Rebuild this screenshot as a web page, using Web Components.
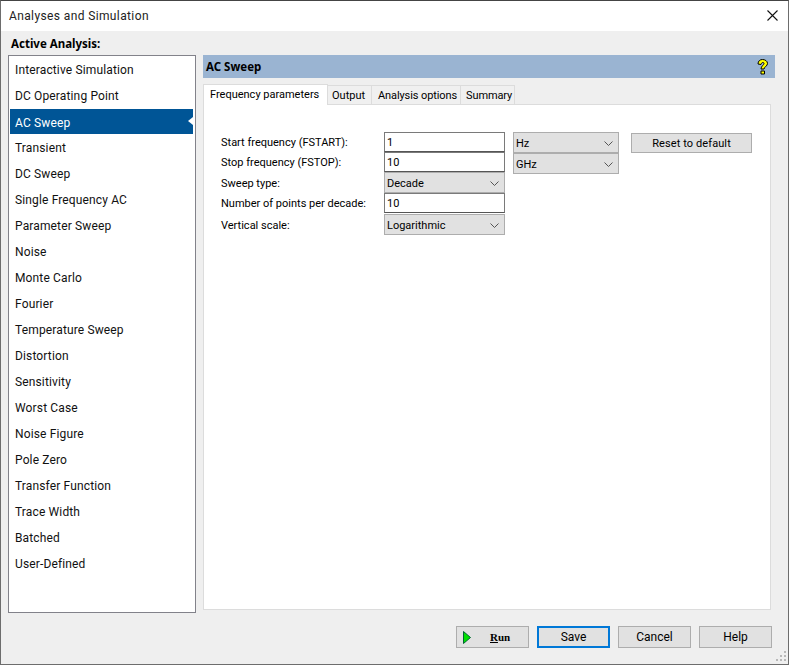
<!DOCTYPE html>
<html>
<head>
<meta charset="utf-8">
<title>Analyses and Simulation</title>
<style>
html, body { margin: 0; padding: 0; background: #efefef; }
body { font: 12px Roboto, "Noto Sans", sans-serif; color: #000; }
</style>
</head>
<body>
<analysis-dialog></analysis-dialog>
<script>
class WinButton extends HTMLElement {
  constructor() {
    super()
    this.attachShadow({ mode: 'open' }).innerHTML = `
<style>
:host { display: block; width: 73px; height: 22px; box-sizing: border-box; border: 1px solid #adadad; background: #e1e1e1;
  font-size: 12px; line-height: 20px; text-align: center; color: #000; }
:host([focused]) { border: 2px solid #0078d7; line-height: 18px; }
</style><slot></slot>`
  }
}
customElements.define('win-button', WinButton)

class ComboBox extends HTMLElement {
  constructor() {
    super()
    this.attachShadow({ mode: 'open' }).innerHTML = `
<style>
:host { display: flex; align-items: center; justify-content: space-between; box-sizing: border-box; height: 21px;
  border: 1px solid #adadad; background: #e1e1e1; padding: 1px 5px 0 2px; font-size: 11px; }
svg { display: block; }
</style><slot></slot>
<svg width="9" height="5" viewBox="0 0 9 5"><path d="M.5.5 4.500 4.500 8.500.5" fill="none" stroke="#555" stroke-width="1"/></svg>`
  }
}
customElements.define('combo-box', ComboBox)

class TextField extends HTMLElement {
  constructor() {
    super()
    this.attachShadow({ mode: 'open' }).innerHTML = `
<style>
:host { display: flex; align-items: center; box-sizing: border-box; height: 20px; border: 1px solid #7a7a7a; border-bottom-color: #555;
  background: #fff; padding: 0 2px; font-size: 11px; }
</style><slot></slot>`
  }
}
customElements.define('text-field', TextField)

class AnalysisList extends HTMLElement {
  constructor() {
    super()
    const items = ['Interactive Simulation', 'DC Operating Point', 'AC Sweep', 'Transient', 'DC Sweep', 'Single Frequency AC',
      'Parameter Sweep', 'Noise', 'Monte Carlo', 'Fourier', 'Temperature Sweep', 'Distortion', 'Sensitivity', 'Worst Case',
      'Noise Figure', 'Pole Zero', 'Transfer Function', 'Trace Width', 'Batched', 'User-Defined']
    this.attachShadow({ mode: 'open' }).innerHTML = `
<style>
:host { display: block; box-sizing: border-box; width: 188px; height: 558px; border: 1px solid #82828a; background: #fff; padding: 1px 2px 0 1px; }
.item { position: relative; height: 26px; line-height: 27px; padding-left: 5px; font-size: 12px; letter-spacing: .14px; color: #111; }
.sel { background: #005596; color: #fff; height: 25px; margin-bottom: 1px; line-height: 28px; }
.sel::after { content: ""; position: absolute; right: 0; top: 8px; border: 4.5px solid transparent; border-right: 5px solid #fff; border-left: 0; }
</style>
${items.map(t => `<div class="item${t === 'AC Sweep' ? ' sel' : ''}">${t}</div>`).join('')}`
  }
}
customElements.define('analysis-list', AnalysisList)

class TabStrip extends HTMLElement {
  constructor() {
    super()
    this.attachShadow({ mode: 'open' }).innerHTML = `
<style>
:host { display: flex; align-items: flex-end; height: 21px; font-size: 11px; position: relative; z-index: 1; margin-bottom: -1px; }
div { box-sizing: border-box; height: 19px; line-height: 20px; padding: 0 0 0 5px; white-space: nowrap; background: #f0f0f0; border: 1px solid #dcdcdc; border-left: 0; border-bottom: 0; margin-bottom: 1px; }
.on { height: 21px; line-height: 20px; background: #fff; border-left: 1px solid #dcdcdc; padding: 0 0 0 6px; margin-bottom: 0; width: 125px; }
</style>
<div class="on">Frequency parameters</div><div style="width:44px;padding-left:4px">Output</div><div style="width:89px;padding-left:6px;letter-spacing:-.1px">Analysis options</div><div style="width:54px;letter-spacing:-.1px">Summary</div>`
  }
}
customElements.define('tab-strip', TabStrip)

class FrequencyForm extends HTMLElement {
  constructor() {
    super()
    this.attachShadow({ mode: 'open' }).innerHTML = `
<style>
:host { display: flex; align-items: flex-start; box-sizing: border-box; width: 568px; height: 506px; background: #fff; border: 1px solid #dcdcdc; padding: 27px 0 0 17px; font-size: 11px; }
.rows { display: grid; grid-template-columns: 163px 121px; grid-template-rows: 20px 20px 21px 21px 21px; align-items: start; }
.rows span { white-space: nowrap; line-height: 22px; }
.rows .low { line-height: 24px; }
.units { display: grid; grid-auto-rows: 21px; margin-left: 8px; width: 106px; }
.reset { margin-left: 12px; margin-top: 1px; width: 121px; height: 20px; line-height: 19px; font-size: 11px; letter-spacing: .1px; }
</style>
<div class="rows">
  <span>Start frequency (FSTART):</span><text-field>1</text-field>
  <span>Stop frequency (FSTOP):</span><text-field>10</text-field>
  <span class="low">Sweep type:</span><combo-box>Decade</combo-box>
  <span>Number of points per decade:</span><text-field style="padding-top:1px">10</text-field>
  <span class="low">Vertical scale:</span><combo-box>Logarithmic</combo-box>
</div>
<div class="units"><combo-box>Hz</combo-box><combo-box>GHz</combo-box></div>
<win-button class="reset">Reset to default</win-button>`
  }
}
customElements.define('frequency-form', FrequencyForm)

class AnalysisDialog extends HTMLElement {
  constructor() {
    super()
    this.attachShadow({ mode: 'open' }).innerHTML = `
<style>
:host { display: block; box-sizing: border-box; width: 789px; height: 665px; border: 1px solid #6d6d6d; border-top-color: #444; background: #efefef; overflow: hidden; position: relative; }
.title { display: flex; justify-content: space-between; align-items: center; box-sizing: border-box; height: 30px; background: #fff; padding: 0 10px 2px 8px; font-size: 12px; letter-spacing: .38px; color: #222; }
.title span { padding-top: 2px; }
.caption { font: 700 11.5px "Noto Sans", sans-serif; height: 24px; line-height: 25px; padding-left: 10px; }
.main { display: flex; gap: 7px; padding-left: 7px; }
.head { display: flex; justify-content: space-between; align-items: center; box-sizing: border-box; width: 572px; height: 23px; background: #9ab4d2; padding: 0 5px 0 3px; font: 700 11.5px "Noto Sans", sans-serif; margin-bottom: 6px; }
.foot { display: flex; justify-content: flex-end; gap: 8px; padding: 13px 16px 0 0; }
.run { display: flex; align-items: center; padding: 0 0 0 6px; }
.run b { font: 700 11px "Liberation Serif", serif; margin-left: 19px; }
.run u { text-decoration: underline; }
.grip { position: absolute; right: 1px; bottom: 1px; }
</style>
<div class="title"><span>Analyses and Simulation</span>
  <svg width="11" height="11" viewBox="0 0 11 11"><path d="M.5.5 10.500 10.500M10.500.5.5 10.500" stroke="#111" stroke-width="1.100" fill="none"/></svg>
</div>
<div class="caption">Active Analysis:</div>
<div class="main">
  <analysis-list></analysis-list>
  <div>
    <div class="head"><span>AC Sweep</span>
      <svg width="15" height="18" viewBox="0 0 15 18"><path d="M3 6C3 3 5 1.500 7.500 1.500S12.500 3 12.500 5.500 9.500 8.500 9 11H6C6 8 9 7 9 5.500 9 4 6.500 4 6 6.500Z" fill="#ff0" stroke="#000"/><path d="M6 13H9.500V16H6Z" fill="#ff0" stroke="#000"/></svg>
    </div>
    <tab-strip></tab-strip>
    <frequency-form></frequency-form>
  </div>
</div>
<div class="foot">
  <win-button class="run"><svg width="8" height="13" viewBox="0 0 8 13"><path d="M.5.5 7.500 6.500.5 12.500Z" fill="#00e000" stroke="#063"/></svg><b><u>R</u>un</b></win-button>
  <win-button focused>Save</win-button>
  <win-button>Cancel</win-button>
  <win-button>Help</win-button>
</div>
<svg class="grip" width="12" height="12" viewBox="0 0 12 12" fill="#b8b8b8"><path d="M9 0h2v2H9zM5 4h2v2H5zM9 4h2v2H9zM1 8h2v2H1zM5 8h2v2H5zM9 8h2v2H9z"/></svg>`
  }
}
customElements.define('analysis-dialog', AnalysisDialog)
</script>
</body>
</html>
